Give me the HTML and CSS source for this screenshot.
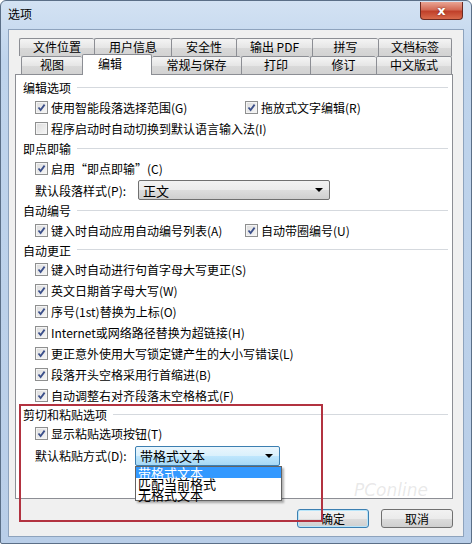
FILE: index.html
```html
<!DOCTYPE html>
<html>
<head>
    <title>选项</title>
    <link rel="stylesheet" href="styles.css">
</head>
<body>

<div class="window">
    <!-- Title bar -->
    <div class="titlebar">
        <span class="title">选项</span>
        <div class="close"><span>x</span></div>
    </div>

    <div class="client">
        <!-- Tab strip: two rows -->
        <div class="tabs">
            <div class="tab-row row-back">
                <div class="tab" style="width:75px">文件位置</div>
                <div class="tab" style="width:77px">用户信息</div>
                <div class="tab" style="width:65px">安全性</div>
                <div class="tab" style="width:76px">输出 PDF</div>
                <div class="tab" style="width:66px">拼写</div>
                <div class="tab" style="width:74px">文档标签</div>
            </div>
            <div class="tab-row row-front">
                <div class="tab" style="width:61px">视图</div>
                <div class="tab selected" style="width:70px">编辑</div>
                <div class="tab" style="width:89px">常规与保存</div>
                <div class="tab" style="width:69px">打印</div>
                <div class="tab" style="width:66px">修订</div>
                <div class="tab" style="width:76px">中文版式</div>
            </div>
        </div>

        <!-- Tab page -->
        <div class="panel">
            <div class="group-title"><span>编辑选项</span></div>
            <div class="row two-col">
                <label class="check"><span class="cb on"></span>使用智能段落选择范围(G)</label>
                <label class="check col2"><span class="cb on"></span>拖放式文字编辑(R)</label>
            </div>
            <div class="row">
                <label class="check"><span class="cb"></span>程序启动时自动切换到默认语言输入法(I)</label>
            </div>

            <div class="group-title"><span>即点即输</span></div>
            <div class="row">
                <label class="check"><span class="cb on"></span>启用“即点即输”(C)</label>
            </div>
            <div class="row field">
                <span class="field-label">默认段落样式(P):</span>
                <div class="combo wide"><span>正文</span><span class="arrow"></span></div>
            </div>

            <div class="group-title"><span>自动编号</span></div>
            <div class="row two-col">
                <label class="check"><span class="cb on"></span>键入时自动应用自动编号列表(A)</label>
                <label class="check col2"><span class="cb on"></span>自动带圈编号(U)</label>
            </div>

            <div class="group-title short"><span>自动更正</span></div>
            <div class="row"><label class="check"><span class="cb on"></span>键入时自动进行句首字母大写更正(S)</label></div>
            <div class="row"><label class="check"><span class="cb on"></span>英文日期首字母大写(W)</label></div>
            <div class="row"><label class="check"><span class="cb on"></span>序号(1st)替换为上标(O)</label></div>
            <div class="row"><label class="check"><span class="cb on"></span>Internet或网络路径替换为超链接(H)</label></div>
            <div class="row"><label class="check"><span class="cb on"></span>更正意外使用大写锁定键产生的大小写错误(L)</label></div>
            <div class="row"><label class="check"><span class="cb on"></span>段落开头空格采用行首缩进(B)</label></div>
            <div class="row"><label class="check"><span class="cb on"></span>自动调整右对齐段落末空格格式(F)</label></div>

            <div class="group-title shorter"><span>剪切和粘贴选项</span></div>
            <div class="row tight"><label class="check"><span class="cb on"></span>显示粘贴选项按钮(T)</label></div>
            <div class="row field tall">
                <span class="field-label">默认粘贴方式(D):</span>
                <div class="combo focus">
                    <span>带格式文本</span><span class="arrow"></span>
                    <!-- open drop-down list -->
                    <ul class="dropdown">
                        <li class="hl">带格式文本</li>
                        <li>匹配当前格式</li>
                        <li>无格式文本</li>
                    </ul>
                </div>
            </div>
        </div>

        <!-- Dialog buttons -->
        <div class="buttons">
            <button type="button" class="default">确定</button>
            <button type="button">取消</button>
        </div>

        <!-- annotation + watermark -->
        <div class="mark"></div>
        <div class="watermark">PConline</div>
    </div>
</div>

</body>
</html>
```

FILE: styles.css
```css
/* Basic styling */
html, body {
    margin: 0;
    padding: 0;
}
body {
    width: 472px;
    height: 544px;
    overflow: hidden;
    font-family: "Noto Sans CJK SC", "DejaVu Sans", sans-serif;
    font-size: 12px;
    color: #000;
    background: #fff;
}
.window {
    box-sizing: border-box;
    width: 472px;
    height: 544px;
    display: flex;
    flex-direction: column;
    border: 1px solid #5b6f87;
    border-radius: 6px 6px 2px 2px;
    background: linear-gradient(#d3e2f3, #bfd4ec 60px, #b9cee8);
}
.titlebar {
    height: 28px;
    display: flex;
    justify-content: space-between;
    align-items: flex-start;
    padding: 0 8px 0 7px;
}
.title {
    margin-top: 5px;
    line-height: 16px;
    color: #000;
}
.close {
    width: 43px;
    height: 18px;
    margin-top: 1px;
    box-sizing: border-box;
    border: 1px solid #6b2a22;
    border-top: none;
    border-radius: 0 0 4px 4px;
    background: linear-gradient(#e9a493, #d36b56 45%, #c0402a 55%, #d86a4c);
    display: flex;
    align-items: center;
    justify-content: center;
    color: #fff;
    font-family: "DejaVu Sans", sans-serif;
    font-weight: bold;
    font-size: 13px;
    text-shadow: 0 0 2px #6a1c10;
}
.client {
    position: relative;
    flex: 1;
    margin: 0 7px 6px 7px;
    border: 1px solid #8ea3bd;
    background: #f0f0f0;
    padding: 8px 10px 0 6px;
    display: flex;
    flex-direction: column;
}

/* tabs */
.tabs {
    display: flex;
    flex-direction: column;
}
.tab-row {
    display: flex;
    height: 18px;
}
.row-back {
    margin-left: 4px;
}
.row-front {
    margin-left: 6px;
}
.tab {
    box-sizing: border-box;
    height: 18px;
    border: 1px solid #8c8e94;
    border-bottom: none;
    border-right: none;
    border-radius: 2px 2px 0 0;
    background: linear-gradient(#f4f4f4, #e6e6e6 50%, #d9d9d9 51%, #d2d2d2);
    text-align: center;
    line-height: 16px;
}
.tab-row .tab:last-child {
    border-right: 1px solid #8c8e94;
}
.tab.selected {
    position: relative;
    height: 21px;
    margin-top: -2px;
    margin-bottom: -1px;
    border-right: 1px solid #8c8e94;
    background: #fff;
    line-height: 17px;
    text-align: left;
    padding-left: 15px;
    z-index: 2;
}
.tab.selected + .tab {
    border-left: none;
}

/* tab page */
.panel {
    position: relative;
    height: 425px;
    box-sizing: border-box;
    border: 1px solid #8c8e94;
    background: #fff;
    padding: 3px 4px 0 7px;
}
.group-title {
    height: 19px;
    display: flex;
    align-items: center;
}
.group-title.short {
    height: 18px;
}
.group-title.shorter {
    height: 17px;
}
.group-title::after {
    content: "";
    flex: 1;
    margin-left: 6px;
    border-top: 1px solid #d5d9de;
    border-bottom: 1px solid #fff;
}
.row {
    height: 21px;
    display: flex;
    align-items: center;
    padding-left: 12px;
}
.row.tight {
    height: 20px;
}
.check {
    display: flex;
    align-items: center;
    white-space: nowrap;
}
.col2 {
    position: absolute;
    left: 229px;
}
.cb {
    box-sizing: border-box;
    width: 13px;
    height: 13px;
    margin-right: 3px;
    border: 1px solid #8e8f8f;
    background: linear-gradient(135deg, #dcdcdc, #f6f6f6);
    box-shadow: inset 0 0 0 1px #f4f4f4;
}
.cb.on {
    background:
        url("data:image/svg+xml;utf8,<svg xmlns='http://www.w3.org/2000/svg' width='11' height='11'><path d='M2.5 5.5 L4.6 8 L8.6 2.6' fill='none' stroke='%233b4f8a' stroke-width='1.8'/></svg>") center/11px 11px no-repeat,
        linear-gradient(135deg, #dcdcdc, #f6f6f6);
}
.field {
    height: 22px;
}
.field.tall {
    height: 25px;
}
.field-label {
    width: 100px;
    white-space: nowrap;
}
.combo {
    position: relative;
    box-sizing: border-box;
    width: 145px;
    height: 20px;
    border: 1px solid #707070;
    border-radius: 2px;
    background: linear-gradient(#f2f2f2, #ebebeb 50%, #dddddd 51%, #cfcfcf);
    display: flex;
    align-items: center;
    justify-content: space-between;
    padding: 0 6px 0 4px;
    font-size: 13px;
}
.combo.wide {
    width: 192px;
    margin-left: 3px;
}
.combo.focus {
    border-color: #3c7fb1;
    background: linear-gradient(#eaf6fd, #d9f0fc 50%, #bee6fd 51%, #a7d9f5);
}
.arrow {
    width: 0;
    height: 0;
    border-left: 4px solid transparent;
    border-right: 4px solid transparent;
    border-top: 4px solid #000;
}
.dropdown {
    position: absolute;
    left: -1px;
    top: 19px;
    width: 147px;
    margin: 0;
    padding: 0;
    list-style: none;
    box-sizing: border-box;
    border: 1px solid #646464;
    background: #fff;
    box-shadow: 2px 2px 2px rgba(0, 0, 0, 0.3);
    z-index: 5;
}
.dropdown li {
    height: 11px;
    line-height: 11px;
    padding-left: 2px;
    font-size: 13px;
}
.dropdown li.hl {
    background: #3399ff;
    color: #fff;
}

/* buttons */
.buttons {
    display: flex;
    justify-content: flex-end;
    gap: 12px;
    margin-top: 10px;
}
button {
    box-sizing: border-box;
    width: 72px;
    height: 19px;
    padding: 0;
    border: 1px solid #707070;
    border-radius: 3px;
    background: linear-gradient(#f2f2f2, #ebebeb 50%, #dddddd 51%, #cfcfcf);
    font-family: "Noto Sans CJK SC", sans-serif;
    font-size: 12px;
    line-height: 16px;
}
button.default {
    border-color: #3c7fb1;
    box-shadow: inset 0 0 0 1px #b7e5fa;
}

/* red annotation frame */
.mark {
    position: absolute;
    left: 10px;
    top: 374px;
    width: 304px;
    height: 118px;
    box-sizing: border-box;
    border: 2px solid #b23240;
    z-index: 4;
}
.watermark {
    position: absolute;
    left: 345px;
    top: 450px;
    font-family: "DejaVu Sans", sans-serif;
    font-style: italic;
    font-size: 17px;
    color: rgba(140, 140, 140, 0.2);
    z-index: 6;
}
```
